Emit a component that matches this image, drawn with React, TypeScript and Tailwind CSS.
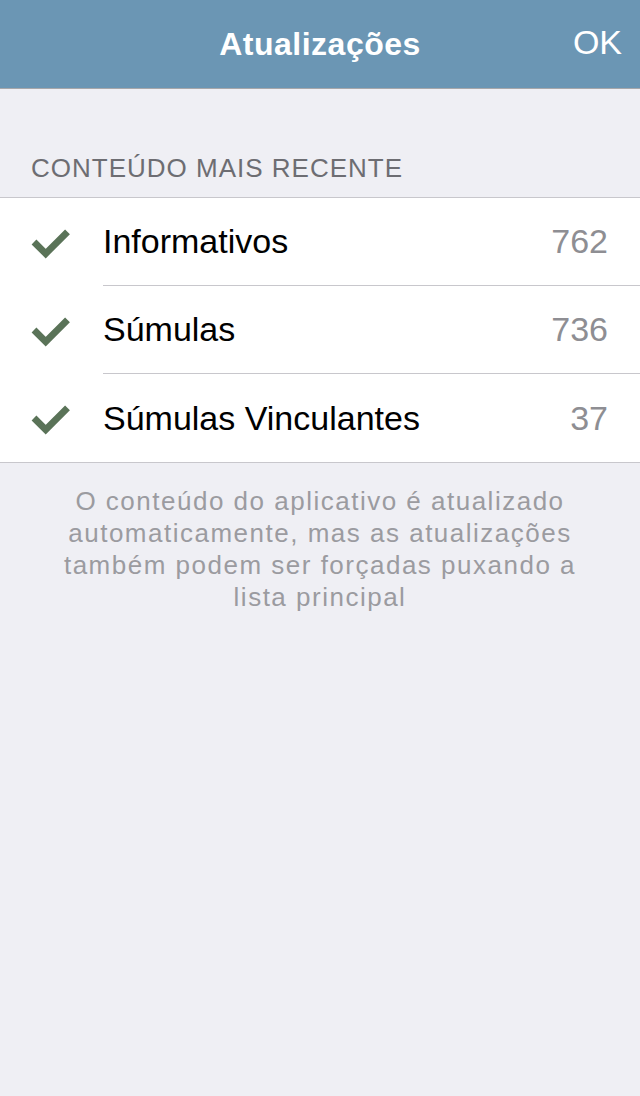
const rows = [
  { label: "Informativos", count: 762 },
  { label: "Súmulas", count: 736 },
  { label: "Súmulas Vinculantes", count: 37 },
];

const Check = () => (
  <svg width="52" height="40" viewBox="0 0 52 40" className="shrink-0">
    <path d="M9 20 L20.7 31.6 L42.5 9.8" fill="none" stroke="#5a7358" strokeWidth="6.8" strokeLinecap="butt" strokeLinejoin="miter" />
  </svg>
);

const App = () => {
  return (
    <div
      className="min-h-screen bg-[#efeff4] flex flex-col"
      style={{ fontFamily: '"Liberation Sans", Arial, sans-serif' }}
    >
      <div className="h-[89px] bg-[#6b96b4] border-b border-[#a7a7aa] flex items-center relative">
        <h1 className="w-full text-center text-white text-[32px] font-bold tracking-[0.5px]">
          Atualizações
        </h1>
        <button className="absolute right-[18px] top-[22px] text-white text-[34px] leading-[40px]">OK</button>
      </div>

      <div className="pt-[64px] pb-[14px] pl-[31px] text-[26px] leading-[30px] tracking-[1px] text-[#6d6d72]">
        CONTEÚDO MAIS RECENTE
      </div>

      <div className="bg-white border-y border-[#c8c7cc]">
        {rows.map((row, i) => (
          <div key={row.label} className="flex items-center h-[88px]">
            <div className="w-[103px] pl-[25px] flex items-center">
              <Check />
            </div>
            <div
              className={
                "flex-1 h-full flex items-center pr-[32px] " +
                (i < rows.length - 1 ? "border-b border-[#c8c7cc]" : "")
              }
            >
              <span className="flex-1 text-[34px] text-black">{row.label}</span>
              <span className="text-[34px] text-[#8e8e93]">{row.count}</span>
            </div>
          </div>
        ))}
      </div>

      <p className="mx-auto w-[540px] pt-[22px] text-center text-[26px] leading-[32px] tracking-[1.5px] text-[#9b9ba0]">
        O conteúdo do aplicativo é atualizado automaticamente, mas as atualizações também podem ser forçadas puxando a lista principal
      </p>
    </div>
  );
};

export default App;
